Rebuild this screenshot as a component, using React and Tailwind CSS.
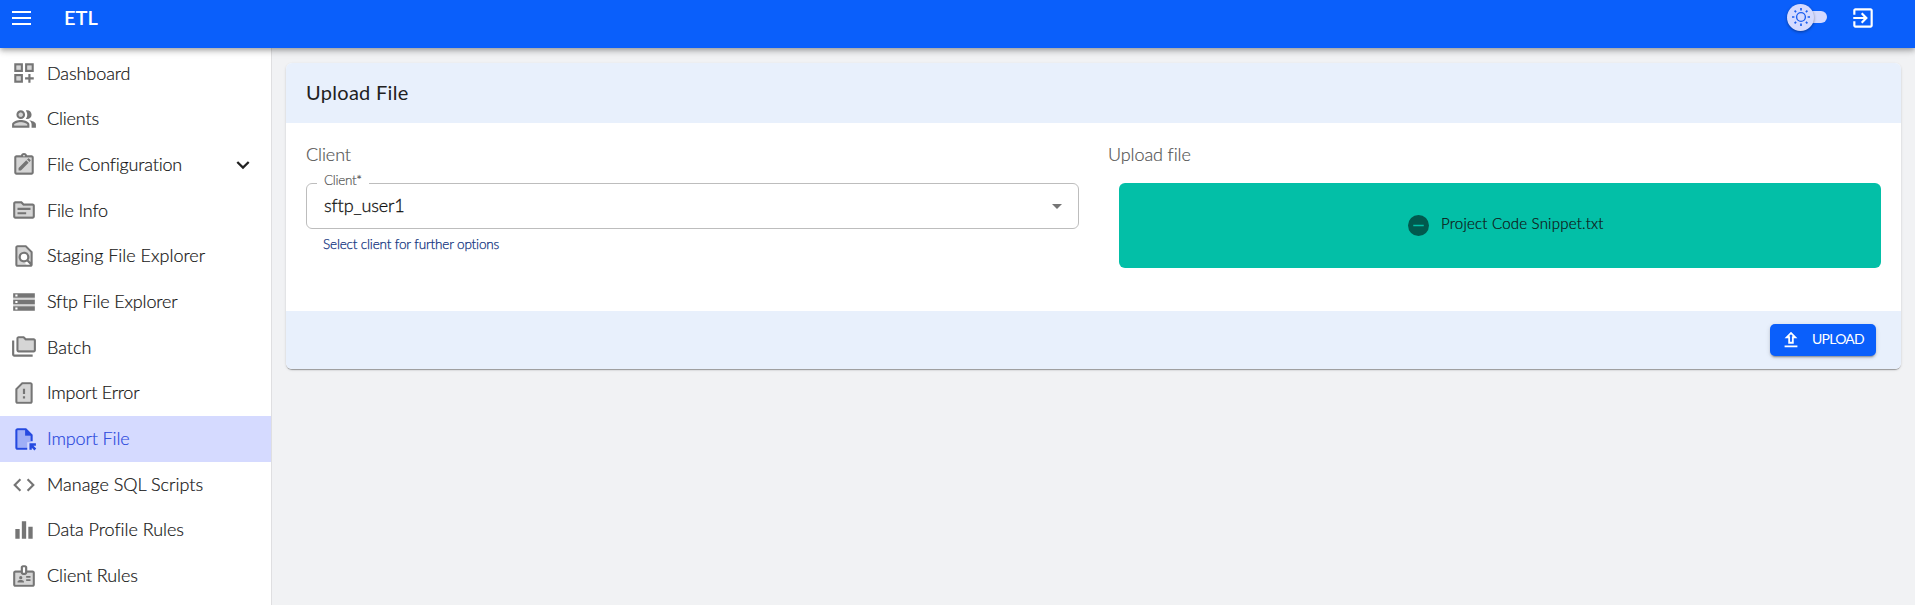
const ICONS = {
  dashboard: {
    soft: 'M5 5h4v4H5zM15 5h4v4h-4zM5 15h4v4H5z',
    line: 'M3 11h8V3H3v8zm2-6h4v4H5V5zM13 3v8h8V3h-8zm6 6h-4V5h4v4zM3 21h8v-8H3v8zm2-6h4v4H5v-4zM18 13h-2v3h-3v2h3v3h2v-3h3v-2h-3z',
  },
  clients: {
    soft: 'M9 6a2 2 0 1 0 0 4 2 2 0 0 0 0-4zM9 15c-2.7 0-5.8 1.29-6 2.01V18h12v-1c-.2-.71-3.3-2-6-2z',
    line: 'M16.67 13.13C18.04 14.06 19 15.32 19 17v3h4v-3c0-2.18-3.57-3.47-6.33-3.87zM15 12c2.21 0 4-1.79 4-4s-1.79-4-4-4c-.47 0-.91.1-1.33.24C14.5 5.27 15 6.58 15 8s-.5 2.73-1.33 3.76c.42.14.86.24 1.33.24zM9 12c2.21 0 4-1.79 4-4s-1.79-4-4-4-4 1.79-4 4 1.79 4 4 4zm0-6c1.1 0 2 .9 2 2s-.9 2-2 2-2-.9-2-2 .9-2 2-2zM9 13c-2.67 0-8 1.34-8 4v3h16v-3c0-2.66-5.33-4-8-4zm6 5H3v-.99C3.2 16.29 6.3 15 9 15s5.8 1.29 6 2v1z',
  },
  config: {
    soft: 'M5 5h14v14H5z',
    line: 'M19 3h-4.18C14.4 1.84 13.3 1 12 1s-2.4.84-2.82 2H5c-1.1 0-2 .9-2 2v14c0 1.1.9 2 2 2h14c1.1 0 2-.9 2-2V5c0-1.1-.9-2-2-2zm-7-.25c.41 0 .75.34.75.75s-.34.75-.75.75-.75-.34-.75-.75.34-.75.75-.75zM19 19H5V5h14v14zM14.1 7.73l2.17 2.17-7.1 7.1H7v-2.17zM14.81 7.02l1.06-1.06c.2-.2.51-.2.71 0l1.46 1.46c.2.2.2.51 0 .71l-1.06 1.06z',
  },
  info: {
    soft: 'M4 6v12h16V8h-8.83l-2-2z',
    line: 'M20 6h-8l-2-2H4c-1.1 0-1.99.9-1.99 2L2 18c0 1.1.9 2 2 2h16c1.1 0 2-.9 2-2V8c0-1.1-.9-2-2-2zm0 12H4V6h5.17l2 2H20v10zM18 12H6v-2h12v2zM14 16H6v-2h8v2z',
  },
  staging: {
    soft: 'M6 4h7.17L18 8.83V18l-2.3-2.3A4.5 4.5 0 1 0 12 17.5L14.5 20H6z',
    line: 'M20 20V8l-6-6H6c-1.1 0-2 .9-2 2v16c0 1.1.9 2 2 2h12c1.1 0 2-.9 2-2zM6 4h7.17L18 8.83v8.75l-1.83-1.83A5 5 0 1 0 14.76 17.17L17.6 20H6zM12 10a3 3 0 1 0 0 6 3 3 0 0 0 0-6z',
    rule: 'evenodd',
  },
  sftp: {
    soft: 'M2 8h20v2H2zM2 14h20v2H2z',
    line: 'M2 20h20v-4H2v4zm2-3h2v2H4v-2zM2 4v4h20V4H2zm4 3H4V5h2v2zm-4 7h20v-4H2v4zm2-3h2v2H4v-2z',
  },
  batch: {
    soft: 'M7 4v11h14V6h-7.83l-2-2z',
    line: 'M3 19h17v2H3c-1.1 0-2-.9-2-2V6h2v13zM23 6v9c0 1.1-.9 2-2 2H7c-1.1 0-2-.9-2-2l.01-11c0-1.1.89-2 1.99-2h5l2 2h7c1.1 0 2 .9 2 2zM7 15h14V6h-7.83l-2-2H7v11z',
  },
  error: {
    soft: 'M10.83 4L6 8.83V20h12V4z',
    line: 'M18 2h-8L4 8v12c0 1.1.9 2 2 2h12c1.1 0 2-.9 2-2V4c0-1.1-.9-2-2-2zm0 18H6V8.83L10.83 4H18v16zM11 15h2v2h-2zM11 8h2v5h-2z',
  },
  importFile: {
    soft: 'M13 4H6v16h9v-5h3V9h-5z',
    line: 'M15 22H6c-1.1 0-2-.9-2-2V4c0-1.1.9-2 2-2h8l6 6v6h-2V9h-5V4H6v16h9v2zM17 16h6v2.2h-2.3l2.6 2.6-1.7 1.7-2.4-2.5V22H17z',
  },
  sql: {
    line: 'M9.4 16.6L4.8 12l4.6-4.6L8 6l-6 6 6 6 1.4-1.4zm5.2 0l4.6-4.6-4.6-4.6L16 6l6 6-6 6-1.4-1.4z',
  },
  chart: { line: 'M4 11h4v9H4zM16 9h4v11h-4zM10 4h4v16h-4z' },
  rules: {
    soft: 'M4 9v11h16V9h-5c0 1.1-.9 2-2 2h-2c-1.1 0-2-.9-2-2z',
    line: 'M20 7h-5V4c0-1.1-.9-2-2-2h-2c-1.1 0-2 .9-2 2v3H4c-1.1 0-2 .9-2 2v11c0 1.1.9 2 2 2h16c1.1 0 2-.9 2-2V9c0-1.1-.9-2-2-2zM11 4h2v5h-2V4zm9 16H4V9h5c0 1.1.9 2 2 2h2c1.1 0 2-.9 2-2h5v11zM9 15a1.5 1.5 0 1 0 0-3 1.5 1.5 0 0 0 0 3zM11.08 16.18C10.44 15.9 9.74 15.75 9 15.75s-1.44.15-2.08.43c-.56.24-.92.78-.92 1.39V18h6v-.43c0-.61-.36-1.15-.92-1.39zM14 15h4v1.5h-4zM14 12h4v1.5h-4z',
  },
};

const ITEMS = [
  { icon: 'dashboard', label: 'Dashboard', track: 'tracking-[-0.08px]' },
  { icon: 'clients', label: 'Clients', track: 'tracking-[-0.18px]' },
  { icon: 'config', label: 'File Configuration', track: 'tracking-[-0.18px]', expandable: true },
  { icon: 'info', label: 'File Info', track: 'tracking-[-0.18px]' },
  { icon: 'staging', label: 'Staging File Explorer', track: 'tracking-[0px]' },
  { icon: 'sftp', label: 'Sftp File Explorer', track: 'tracking-[-0.15px]' },
  { icon: 'batch', label: 'Batch', track: 'tracking-[-0.02px]' },
  { icon: 'error', label: 'Import Error', track: 'tracking-[-0.24px]' },
  { icon: 'importFile', label: 'Import File', track: 'tracking-[-0.12px]', active: true },
  { icon: 'sql', label: 'Manage SQL Scripts', track: 'tracking-[0px]' },
  { icon: 'chart', label: 'Data Profile Rules', track: 'tracking-[-0.04px]' },
  { icon: 'rules', label: 'Client Rules', track: 'tracking-[-0.08px]' },
];

function TwoToneIcon({ name, className }) {
  const { soft, line, rule } = ICONS[name];
  return (
    <svg viewBox="0 0 24 24" fill="currentColor" className={className}>
      {soft && <path d={soft} opacity="0.3" />}
      <path d={line} fillRule={rule} />
    </svg>
  );
}

function NavItem({ icon, label, track, active, expandable }) {
  return (
    <a
      className={`flex h-[45.7px] shrink-0 items-center pl-[11px] pr-[18px] ${
        active ? 'bg-[#d5daff] text-[#2b49dd]' : 'text-[#161616]'
      }`}
    >
      <TwoToneIcon name={icon} className={`size-[26px] ${active ? 'text-[#2549e0]' : 'text-[#757575]'}`} />
      <span className={`mb-[1.5px] ml-2.5 flex-1 text-lg font-light [-webkit-text-stroke:0.2px] ${track}`}>{label}</span>
      {expandable && (
        <svg viewBox="0 0 20 20" fill="none" stroke="#212121" strokeWidth="2.3" className="size-5">
          <path d="M4.3 7l5.7 5.6L15.7 7" />
        </svg>
      )}
    </a>
  );
}

function Header() {
  return (
    <header className="relative z-10 flex h-12 shrink-0 items-start bg-[#0a5ffb] text-white shadow-[0_2px_4px_-1px_rgba(0,0,0,0.2),0_4px_5px_rgba(0,0,0,0.14),0_1px_10px_rgba(0,0,0,0.12)]">
      <svg viewBox="0 0 24 24" fill="currentColor" className="ml-2.5 mt-1.5 size-6">
        <path d="M2 5h19v2H2zM2 11h19v2H2zM2 17h19v2H2z" />
      </svg>
      <h1 className="ml-[30px] mt-[3px] text-xl leading-7 font-semibold">ETL</h1>
      <div className="ml-auto mr-[23px] mt-[3px] flex h-7 items-center">
        <div className="z-10 flex size-[27px] items-center justify-center rounded-full bg-[#d5daff] shadow-[0_1px_3px_rgba(0,0,0,0.4)]">
          <svg viewBox="0 0 20 20" fill="none" stroke="#1d5ff0" className="size-5">
            <circle cx="10" cy="10" r="4.4" strokeWidth="1.4" />
            <path
              strokeWidth="1.7"
              d="M10 1v2.4M10 16.6V19M1 10h2.4M16.6 10H19M3.6 3.6l1.5 1.5M14.9 14.9l1.5 1.5M16.4 3.6l-1.5 1.5M5.1 14.9l-1.5 1.5"
            />
          </svg>
        </div>
        <div className="-ml-3 h-3 w-[25px] rounded-full bg-[#d5daff]" />
      </div>
      <svg viewBox="0 0 24 24" fill="currentColor" className="mr-[39px] mt-[5px] size-[26px]">
        <path d="M10.09 15.59L11.5 17l5-5-5-5-1.41 1.41L12.67 11H3v2h9.67l-2.58 2.59zM19 3H5c-1.11 0-2 .9-2 2v4h2V5h14v14H5v-4H3v4c0 1.1.89 2 2 2h14c1.1 0 2-.9 2-2V5c0-1.1-.9-2-2-2z" />
      </svg>
    </header>
  );
}

export default function App() {
  return (
    <div className="flex h-[605px] flex-col overflow-hidden bg-[#f1f2f4] font-['Lato',sans-serif] text-[#212121]">
      <Header />
      <div className="flex min-h-0 flex-1">
        <nav className="flex w-[272px] shrink-0 flex-col overflow-hidden border-r border-[#dfdfe1] bg-white pt-[2.5px]">
          {ITEMS.map((item) => (
            <NavItem key={item.label} {...item} />
          ))}
        </nav>
        <main className="flex-1 pl-3.5 pr-3.5 pt-[15px]">
          <section className="flex h-[306px] flex-col overflow-hidden rounded-md bg-white shadow-[0_2px_1px_-1px_rgba(0,0,0,0.2),0_1px_1px_rgba(0,0,0,0.14),0_1px_3px_rgba(0,0,0,0.12)]">
            <div className="flex h-[60px] items-center bg-[#e8f0fc] pl-5">
              <h2 className="mb-0.5 text-xl tracking-[0.3px]">Upload File</h2>
            </div>
            <div className="flex h-[188px] pl-5 pr-5 pt-[19px]">
              <div className="w-[773px]">
                <p className="text-lg leading-6 font-light tracking-[-0.1px] text-[#555] [-webkit-text-stroke:0.2px]">Client</p>
                <div className="relative mt-[17px] flex h-[46px] items-center justify-between rounded-md border border-[#bdbdbd] pl-[17px] pr-4">
                  <span className="absolute -top-3.5 left-2.5 bg-white pl-[7px] pr-[7px] text-[13.5px] leading-5 font-light tracking-[-0.3px] text-[#555] [-webkit-text-stroke:0.2px]">
                    Client*
                  </span>
                  <span className="mb-[3px] text-lg font-light tracking-[-0.1px] text-[#111] [-webkit-text-stroke:0.3px]">sftp_user1</span>
                  <span className="h-0 w-0 border-x-[5.5px] border-t-[5.5px] border-x-transparent border-t-[#757575]" />
                </div>
                <p className="ml-[17px] mt-[5px] text-[13.5px] leading-5 font-light tracking-[-0.15px] text-[#0d2f7c] [-webkit-text-stroke:0.25px]">
                  Select client for further options
                </p>
              </div>
              <div className="ml-[29px] flex-1">
                <p className="text-lg leading-6 font-light tracking-[-0.1px] text-[#555] [-webkit-text-stroke:0.2px]">Upload file</p>
                <div className="ml-[11px] mt-[17px] flex h-[85px] items-center justify-center rounded-md bg-[#03bfa7] pl-3">
                  <svg viewBox="0 0 22 22" className="mr-3 size-[21px]">
                    <circle cx="11" cy="11" r="11" fill="#01594e" />
                    <path d="M5.5 11h11" stroke="#03bfa7" strokeWidth="1.7" />
                  </svg>
                  <span className="mb-[5px] w-[163px] text-[15px] leading-5 font-light tracking-[0.22px] whitespace-nowrap text-[#111] [-webkit-text-stroke:0.2px]">
                    Project Code Snippet.txt
                  </span>
                </div>
              </div>
            </div>
            <div className="flex flex-1 items-center justify-end bg-[#e8f0fc] pr-[25px]">
              <button className="flex h-8 w-[106px] items-center rounded-[5px] bg-[#0a5ffb] pl-2.5 text-white shadow-[0_3px_1px_-2px_rgba(0,0,0,0.2),0_2px_2px_rgba(0,0,0,0.14),0_1px_5px_rgba(0,0,0,0.12)]">
                <svg viewBox="0 0 24 24" fill="currentColor" className="size-[22px]">
                  <path d="M5 20h14v-2H5v2zM5 10h4v6h6v-6h4l-7-7-7 7zm8-2v6h-2V8H9.83L12 5.83 14.17 8H13z" />
                </svg>
                <span className="mb-0.5 ml-2.5 text-sm tracking-[-0.75px]">UPLOAD</span>
              </button>
            </div>
          </section>
        </main>
      </div>
    </div>
  );
}
